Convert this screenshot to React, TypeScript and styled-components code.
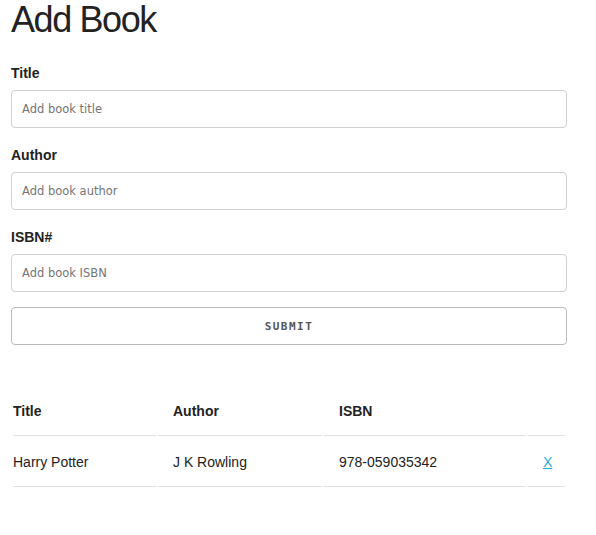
import React from "react";
import styled, { createGlobalStyle } from "styled-components";

const GlobalStyle = createGlobalStyle`
  *, *::before, *::after { box-sizing: border-box; }
  html, body { margin: 0; padding: 0; background: #fff; }
  body {
    font-family: "Liberation Sans", Arial, sans-serif;
    font-size: 14px;
    line-height: 24px;
    color: #222;
  }
`;

const Page = styled.div`
  width: 578px;
  padding: 0 11px;
`;

const Heading = styled.h1`
  margin: 0 0 22px;
  font-size: 36px;
  line-height: 39px;
  font-weight: 400;
  letter-spacing: -1.4px;
  color: #222;
`;

const Form = styled.form`
  display: flex;
  flex-direction: column;
`;

const Label = styled.label`
  display: block;
  font-weight: 700;
  font-size: 14px;
  line-height: 24px;
  margin-bottom: 5px;
`;

const Input = styled.input`
  display: block;
  width: 556px;
  height: 38px;
  padding: 6px 10px;
  margin: 0 0 15px;
  border: 1px solid #d1d1d1;
  border-radius: 4px;
  background: #fff;
  font-family: "DejaVu Sans", Verdana, sans-serif;
  font-size: 11.5px;
  color: #333;
  outline: none;
  &::placeholder { color: #757575; }
`;

const SubmitButton = styled.button`
  display: block;
  width: 556px;
  height: 38px;
  margin: 0 0 40px;
  padding: 0 30px;
  border: 1px solid #bbb;
  border-radius: 4px;
  background: transparent;
  color: #555;
  font-family: "DejaVu Sans Mono", monospace;
  font-size: 11px;
  font-weight: 700;
  letter-spacing: 1.5px;
  text-transform: uppercase;
  cursor: pointer;
`;

const Table = styled.table`
  width: 556px;
  table-layout: fixed;
  border-collapse: separate;
  border-spacing: 2px;
`;

const Th = styled.th<{ $w: number; $first?: boolean; $last?: boolean }>`
  width: ${(p) => p.$w}px;
  text-align: left;
  font-weight: 700;
  padding: 12px ${(p) => (p.$last ? 0 : 15)}px 12px ${(p) => (p.$first ? 0 : 15)}px;
  border-bottom: 1px solid #e1e1e1;
`;

const Td = styled.td<{ $first?: boolean; $last?: boolean }>`
  text-align: left;
  padding: 12px ${(p) => (p.$last ? 0 : 15)}px 12px ${(p) => (p.$first ? 0 : 15)}px;
  border-bottom: 1px solid #e1e1e1;
`;

const RemoveLink = styled.a`
  color: #1eaedb;
  text-decoration: underline;
  cursor: pointer;
`;

const books = [{ title: "Harry Potter", author: "J K Rowling", isbn: "978-059035342" }];

export default function App() {
  return (
    <>
      <GlobalStyle />
      <Page>
        <Heading>Add Book</Heading>
        <Form onSubmit={(e) => e.preventDefault()}>
          <Label htmlFor="title">Title</Label>
          <Input id="title" type="text" placeholder="Add book title" />
          <Label htmlFor="author">Author</Label>
          <Input id="author" type="text" placeholder="Add book author" />
          <Label htmlFor="isbn">ISBN#</Label>
          <Input id="isbn" type="text" placeholder="Add book ISBN" />
          <SubmitButton type="submit">Submit</SubmitButton>
        </Form>
        <Table>
          <thead>
            <tr>
              <Th $w={143} $first>Title</Th>
              <Th $w={164}>Author</Th>
              <Th $w={202}>ISBN</Th>
              <Th $w={37} $last></Th>
            </tr>
          </thead>
          <tbody>
            {books.map((b) => (
              <tr key={b.isbn}>
                <Td $first>{b.title}</Td>
                <Td>{b.author}</Td>
                <Td>{b.isbn}</Td>
                <Td $last>
                  <RemoveLink href="#">X</RemoveLink>
                </Td>
              </tr>
            ))}
          </tbody>
        </Table>
      </Page>
    </>
  );
}
